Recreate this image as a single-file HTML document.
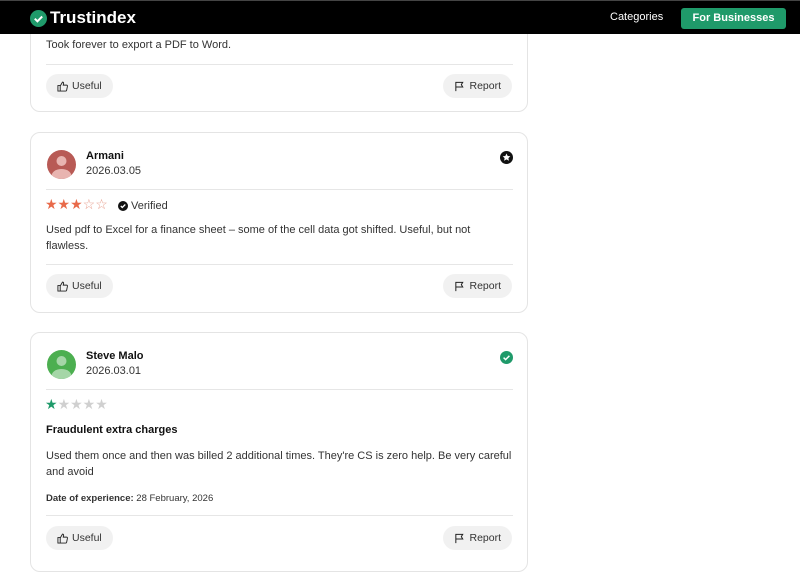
<!DOCTYPE html>
<html><head><meta charset="utf-8"><style>
*{box-sizing:border-box;margin:0;padding:0}
body{width:800px;height:555px;overflow:hidden;background:#fff;font-family:"Liberation Sans",sans-serif;color:#222;position:relative}
.hdr{position:absolute;left:0;top:0;width:800px;height:34px;background:#000;border-top:1px solid #444}
.logo{position:absolute;left:30px;top:7px;color:#fff;font-weight:bold;font-size:17px;display:flex;align-items:center;gap:3px}
.cat{position:absolute;left:610px;top:10px;color:#fff;font-size:11px}
.fb{position:absolute;left:681px;top:7px;width:105px;height:21px;background:#1f9a6a;border-radius:3px;color:#fff;font-size:11px;font-weight:bold;text-align:center;line-height:21px}
.card{position:absolute;left:30px;width:498px;border:1px solid #e4e4e4;border-radius:10px;background:#fff}
.abs{position:absolute}
.hr{position:absolute;left:15px;width:467px;height:1px;background:#e6e6e6}
.btn{position:absolute;height:24px;background:#f1f1f1;border-radius:12px;font-size:10.5px;color:#333;display:flex;align-items:center;gap:4px;padding:0 11px}
.t{font-size:11px;color:#333;line-height:16px}
.name{font-size:11px;font-weight:bold;color:#111}
.date{font-size:11px;color:#333}
.av{position:absolute;left:16px;width:29px;height:29px;border-radius:50%;overflow:hidden}
</style></head><body>
<svg width="0" height="0" style="position:absolute"><defs>
<symbol id="th" viewBox="0 0 12 12"><path d="M1 5h2.5v6H1zM3.5 5.5L6 1.2c.9 0 1.4.6 1.2 1.5L6.8 4.5h3.6c.7 0 1.1.6 1 1.2l-.9 4.4c-.1.5-.5.9-1 .9H3.5" fill="none" stroke="#222" stroke-width="1"/></symbol>
<symbol id="fl" viewBox="0 0 12 12"><path d="M2 11V1.5h7.5L8 4l1.5 2.5H2" fill="none" stroke="#222" stroke-width="1.1"/></symbol>
</defs></svg>
<div class="card" style="top:-20px;height:132px">
 <div class="abs t" style="left:15px;top:56px">Took forever to export a PDF to Word.</div>
 <div class="hr" style="top:83px"></div>
 <div class="btn" style="left:15px;top:93px"><svg width="11" height="11"><use href="#th"/></svg><span>Useful</span></div>
 <div class="btn" style="right:15px;top:93px"><svg width="11" height="11"><use href="#fl"/></svg><span>Report</span></div>
</div>
<div class="card" style="top:132px;height:181px">
 <div class="av" style="top:17px;background:#b85a55"><svg width="29" height="29"><circle cx="14.5" cy="11" r="5" fill="#e8b4b0"/><ellipse cx="14.5" cy="26" rx="10" ry="7" fill="#e8b4b0"/></svg></div>
 <div class="abs name" style="left:55px;top:17px">Armani</div>
 <div class="abs date" style="left:55px;top:32px">2026.03.05</div>
 <svg class="abs" style="left:469px;top:18px" width="13" height="13"><circle cx="6.5" cy="6.5" r="6.5" fill="#111"/><path d="M6.5 2.5l1.2 2.5 2.6.3-1.9 1.8.5 2.6-2.4-1.3-2.4 1.3.5-2.6-1.9-1.8 2.6-.3z" fill="#fff"/></svg>
 <div class="hr" style="top:56px"></div>
 <div class="abs" style="left:14px;top:63px;font-size:14px;color:#e86a4a">★★★<span style="color:#e8a090">☆☆</span></div>
 <svg class="abs" style="left:87px;top:68px" width="10" height="10"><circle cx="5" cy="5" r="5" fill="#111"/><path d="M2.8 5l1.5 1.5 3-3" stroke="#fff" stroke-width="1.3" fill="none"/></svg>
 <div class="abs t" style="left:100px;top:65px">Verified</div>
 <div class="abs t" style="left:15px;top:89px;width:440px">Used pdf to Excel for a finance sheet – some of the cell data got shifted. Useful, but not flawless.</div>
 <div class="hr" style="top:131px"></div>
 <div class="btn" style="left:15px;top:141px"><svg width="11" height="11"><use href="#th"/></svg><span>Useful</span></div>
 <div class="btn" style="right:15px;top:141px"><svg width="11" height="11"><use href="#fl"/></svg><span>Report</span></div>
</div>
<div class="card" style="top:332px;height:240px">
 <div class="av" style="top:17px;background:#4caf50"><svg width="29" height="29"><circle cx="14.5" cy="11" r="5" fill="#a5d6a7"/><ellipse cx="14.5" cy="26" rx="10" ry="7" fill="#a5d6a7"/></svg></div>
 <div class="abs name" style="left:55px;top:17px">Steve Malo</div>
 <div class="abs date" style="left:55px;top:32px">2026.03.01</div>
 <svg class="abs" style="left:469px;top:18px" width="13" height="13"><circle cx="6.5" cy="6.5" r="6.5" fill="#1f9a6a"/><path d="M3.6 6.6l2 2 3.8-3.8" stroke="#fff" stroke-width="1.5" fill="none"/></svg>
 <div class="hr" style="top:56px"></div>
 <div class="abs" style="left:14px;top:63px;font-size:14px;color:#d0d0d0"><span style="color:#1f9a6a">★</span>★★★★</div>
 <div class="abs" style="left:15px;top:91px;font-size:11px;font-weight:bold;color:#111">Fraudulent extra charges</div>
 <div class="abs t" style="left:15px;top:115px;width:475px">Used them once and then was billed 2 additional times. They're CS is zero help. Be very careful and avoid</div>
 <div class="abs" style="left:15px;top:160px;font-size:9.5px;color:#333"><b>Date of experience:</b> 28 February, 2026</div>
 <div class="hr" style="top:182px"></div>
 <div class="btn" style="left:15px;top:193px"><svg width="11" height="11"><use href="#th"/></svg><span>Useful</span></div>
 <div class="btn" style="right:15px;top:193px"><svg width="11" height="11"><use href="#fl"/></svg><span>Report</span></div>
</div>
<div class="hdr">
 <div class="logo"><svg width="17" height="17"><circle cx="8.5" cy="8.5" r="8.5" fill="#1f9a6a"/><path d="M4.8 8.7l2.6 2.6 4.8-4.8" stroke="#fff" stroke-width="2" fill="none"/></svg>Trustindex</div>
 <div class="cat">Categories</div>
 <div class="fb">For Businesses</div>
</div>
</body></html>
